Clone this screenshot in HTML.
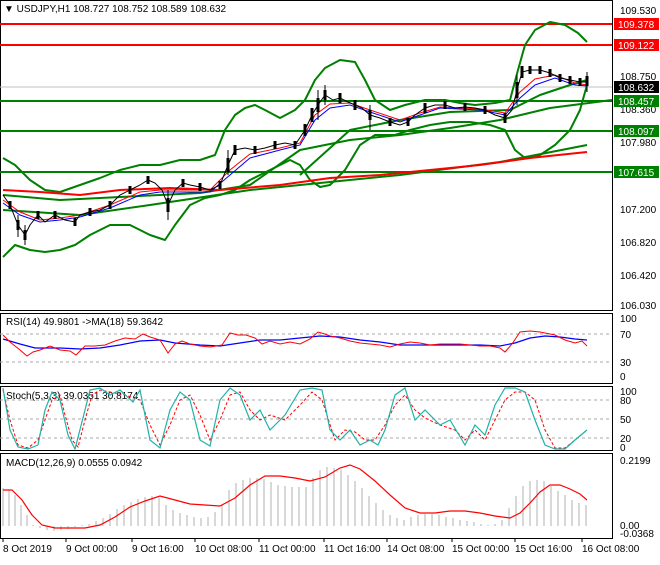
<!DOCTYPE html><html><head><style>
body{margin:0;background:#fff;width:660px;height:560px;overflow:hidden;font-family:"Liberation Sans",sans-serif}
svg text{font-family:"Liberation Sans",sans-serif;font-size:10px}
</style></head><body>
<svg width="660" height="560" xmlns="http://www.w3.org/2000/svg">
<rect width="660" height="560" fill="#fff"/>
<g fill="none" stroke="#000" stroke-width="1">
<rect x="0.5" y="0.5" width="612" height="310"/>
<rect x="0.5" y="313.5" width="612" height="70"/>
<rect x="0.5" y="386.5" width="612" height="64"/>
<rect x="0.5" y="453.5" width="612" height="85"/>
</g>
<line x1="0" y1="87" x2="612" y2="87" stroke="#c0c0c0"/>
<g stroke="#ff0000" stroke-width="2"><line x1="0" y1="24" x2="612" y2="24"/><line x1="0" y1="45" x2="612" y2="45"/></g>
<g stroke="#008000" stroke-width="2"><line x1="0" y1="101" x2="612" y2="101"/><line x1="0" y1="131" x2="612" y2="131"/><line x1="0" y1="172" x2="612" y2="172"/></g>
<g fill="none" stroke="#008000" stroke-width="2" stroke-linejoin="round">
<polyline points="3,158 15,165 30,180 45,190 60,192 80,185 100,178 120,170 140,165 160,165 180,160 200,160 215,155 225,130 235,115 245,108 255,105 265,110 280,118 295,110 305,100 315,80 325,68 340,60 355,62 365,80 375,100 390,110 405,105 425,100 445,100 460,103 475,105 495,103 510,100 518,70 525,45 535,30 550,22 565,25 578,33 587,42"/>
<polyline points="3,257 15,245 30,250 45,252 60,250 75,245 90,235 110,225 130,225 150,235 165,240 175,225 190,205 205,198 220,195 235,190 250,180 270,170 290,160 300,165 310,180 320,187 330,185 345,170 360,145 375,135 395,135 410,130 430,125 450,122 470,122 490,125 505,130 515,150 525,158 540,155 555,145 570,130 580,110 587,85"/>
<polyline points="3,195 60,200 120,197 200,193 250,185 300,150 350,140 400,135 450,128 500,120 550,108 612,100"/>
<polyline points="3,210 80,215 150,205 250,190 300,185 400,175 500,162 587,145"/>
<polyline points="300,175 350,130 400,120 450,112 510,110 540,95 570,85 587,80"/>
</g>
<polyline fill="none" stroke="#ff0000" stroke-width="2" points="3,190 40,192 80,195 120,190 170,188 220,190 280,185 330,178 380,175 430,170 480,165 530,158 587,152"/>
<polyline fill="none" stroke="#0000ff" stroke-width="1" points="3,203 20,215 40,222 60,220 80,217 110,208 140,195 160,192 180,192 210,192 230,175 250,158 280,150 300,145 315,120 330,108 350,105 370,112 400,122 420,115 440,108 480,110 505,115 520,98 535,85 555,78 575,85 587,86"/>
<polyline fill="none" stroke="#ff0000" stroke-width="1" points="3,200 20,212 40,220 60,218 80,215 110,205 140,192 160,190 180,190 210,190 230,170 250,154 280,148 300,143 315,115 330,104 350,103 370,110 400,120 420,113 440,107 480,109 505,113 520,92 535,79 555,75 575,83 587,85"/>
<polyline fill="none" stroke="#000" stroke-width="1" points="3,195 10,205 18,225 25,235 30,225 38,215 45,222 55,215 65,220 75,222 80,215 90,212 100,210 110,205 120,195 130,190 140,185 148,180 155,183 162,190 168,205 175,190 183,183 190,185 200,187 210,190 220,185 228,165 235,150 245,148 255,150 265,148 275,145 285,143 295,145 305,130 312,115 318,105 325,95 333,100 340,98 348,102 355,105 362,108 370,115 380,118 390,122 400,125 408,122 415,115 425,108 435,105 445,105 455,108 465,107 475,108 485,110 495,115 505,118 512,110 517,90 522,72 530,70 540,70 550,73 560,78 570,80 580,82 587,82"/>
<g stroke="#000" stroke-width="3">
<path d="M10 201v8M18 220v10M25 230v10M38 211v8M55 211v8M75 218v8M90 208v8M110 201v8M130 186v8M148 176v8M168 198v14M183 179v8M200 183v8M220 181v8M228 158v14M235 145v10M255 146v8M275 141v8M295 141v8M305 124v12M312 108v14M318 98v14M325 90v10M340 93v10M355 100v10M370 110v10M390 118v8M408 118v8M425 103v10M445 101v8M465 103v8M485 106v8M505 113v10M517 82v16M522 66v12M530 66v8M540 66v8M550 69v8M560 74v8M570 76v8M580 78v8M587 76v10"/>
</g>
<g stroke="#000" stroke-width="1">
<path d="M18 215v22M25 225v20M168 190v30M228 150v25M318 90v30M325 85v20M370 105v25M517 75v30M587 72v20"/>
</g>
<g fill="#000"><text x="620" y="14">109.530</text><text x="620" y="80">108.750</text><text x="620" y="113">108.360</text><text x="620" y="146">107.980</text><text x="620" y="213">107.200</text><text x="620" y="246">106.820</text><text x="620" y="279">106.420</text><text x="620" y="309">106.030</text></g>
<rect x="614" y="18" width="45" height="12" fill="#ff0000"/><text x="618" y="28" fill="#fff">109.378</text>
<rect x="614" y="39" width="45" height="12" fill="#ff0000"/><text x="618" y="49" fill="#fff">109.122</text>
<rect x="614" y="81" width="45" height="12" fill="#000"/><text x="618" y="91" fill="#fff">108.632</text>
<rect x="614" y="95" width="45" height="12" fill="#008000"/><text x="618" y="105" fill="#fff">108.457</text>
<rect x="614" y="125" width="45" height="12" fill="#008000"/><text x="618" y="135" fill="#fff">108.097</text>
<rect x="614" y="166" width="45" height="12" fill="#008000"/><text x="618" y="176" fill="#fff">107.615</text>
<text x="4" y="12" fill="#000">▼ USDJPY,H1  108.727 108.752 108.589 108.632</text>
<g stroke="#aaa" stroke-dasharray="3,3"><line x1="0" y1="334" x2="612" y2="334"/><line x1="0" y1="362" x2="612" y2="362"/></g>
<text x="6" y="325">RSI(14) 49.9801  -&gt;MA(18) 59.3642</text>
<g><text x="620" y="322">100</text><text x="620" y="338">70</text><text x="620" y="366">30</text><text x="620" y="380">0</text></g>
<polyline fill="none" stroke="#0000ff" stroke-width="1.2" points="3,339 20,344 35,348 60,348 80,349 100,348 120,345 140,341 160,340 175,343 200,345 220,346 240,343 260,340 280,340 300,338 320,336 340,337 360,340 380,342 400,345 420,345 440,345 460,345 480,345 500,346 515,343 530,338 545,336 560,337 575,339 587,340"/>
<polyline fill="none" stroke="#ff0000" stroke-width="1" points="3,335 10,342 20,350 27,356 33,352 40,350 50,346 60,350 70,351 76,355 85,346 95,346 105,345 115,341 125,338 135,339 143,334 150,337 160,340 168,353 175,344 182,341 190,344 200,346 210,347 222,345 230,333 238,335 246,335 255,338 262,344 270,341 280,344 290,342 300,344 310,339 318,332 325,334 330,336 340,338 350,341 360,343 370,344 380,345 390,347 400,344 410,342 420,343 430,345 440,344 450,344 460,344 470,345 480,346 490,346 500,348 505,352 512,344 520,332 530,331 540,332 555,335 565,340 575,343 582,341 587,346"/>
<g stroke="#aaa" stroke-dasharray="3,3"><line x1="0" y1="400" x2="612" y2="400"/><line x1="0" y1="419" x2="612" y2="419"/><line x1="0" y1="438" x2="612" y2="438"/></g>
<text x="6" y="399">Stoch(5,3,3) 39.0351 30.8174</text>
<g><text x="620" y="395">100</text><text x="620" y="404">80</text><text x="620" y="423">50</text><text x="620" y="442">20</text><text x="620" y="451">0</text></g>
<polyline fill="none" stroke="#ff0000" stroke-dasharray="3,2" stroke-width="1" points="3,390 10,420 18,445 28,448 38,440 45,420 52,400 60,395 65,415 72,440 78,447 85,420 92,395 100,390 110,392 125,395 140,400 150,425 160,445 170,425 180,400 190,395 200,415 210,440 220,420 230,395 240,392 250,410 260,420 270,415 285,420 300,405 312,392 322,400 335,440 345,430 355,432 365,440 375,440 385,425 395,405 405,395 415,410 425,418 440,425 455,430 465,440 475,430 485,440 495,420 505,400 515,392 525,392 535,400 545,430 555,448 565,448 575,440 587,430"/>
<polyline fill="none" stroke="#20b2aa" stroke-width="1.2" points="3,388 10,430 18,447 28,449 38,445 45,410 52,392 60,400 68,435 75,449 85,410 90,390 100,388 110,395 120,390 133,402 140,390 150,440 160,448 170,410 180,392 190,400 200,440 210,446 220,400 230,388 240,395 250,420 260,410 270,430 285,415 300,390 312,388 322,390 330,430 340,440 350,430 360,445 370,440 378,445 385,430 395,395 405,388 415,420 425,410 440,425 450,420 465,445 475,425 485,435 495,405 505,388 515,388 525,392 535,420 545,445 555,449 565,449 575,440 587,430"/>
<text x="6" y="466">MACD(12,26,9) 0.0555 0.0942</text>
<text x="620" y="464">0.2199</text><text x="620" y="529">0.00</text><text x="620" y="537">-0.0368</text>
<g stroke="#b0b0b0" stroke-width="1">
<path d="M3 526V488M9 526V490M15 526V495M21 526V505M27 526V515M33 526V525M40 526V528M47 526V530M54 526V531M61 526V530M68 526V529M75 526V527M82 526V525M89 526V524M96 526V521M103 526V518M110 526V514M117 526V509M124 526V505M131 526V502M138 526V499M145 526V497M152 526V496M159 526V498M166 526V505M173 526V510M180 526V513M187 526V515M194 526V517M201 526V518M208 526V517M215 526V512M222 526V505M229 526V490M236 526V483M243 526V480M250 526V478M257 526V478M264 526V479M271 526V482M278 526V485M285 526V486M292 526V487M299 526V487M306 526V487M313 526V478M320 526V470M327 526V467M334 526V468M341 526V470M348 526V475M355 526V481M362 526V488M369 526V496M376 526V503M383 526V510M390 526V515M397 526V518M404 526V520M411 526V517M418 526V515M425 526V514M432 526V514M439 526V515M446 526V517M453 526V518M460 526V520M467 526V521M474 526V522M481 526V524M488 526V525M495 526V524M502 526V520M509 526V508M516 526V496M523 526V486M530 526V481M537 526V480M544 526V481M551 526V486M558 526V491M565 526V495M572 526V500M579 526V503M586 526V505"/>
</g>
<polyline fill="none" stroke="#ff0000" stroke-width="1.2" points="3,490 12,490 22,500 32,515 42,525 55,528 70,528 85,528 100,525 115,517 130,507 145,501 160,496 175,500 190,504 205,505 220,506 235,498 250,485 265,476 280,476 295,478 310,481 325,477 340,468 350,465 360,469 375,481 390,495 405,508 420,513 435,513 450,511 465,511 480,513 495,516 510,518 520,513 530,503 540,492 550,485 560,485 570,489 580,494 587,500"/>
<g stroke="#000"><line x1="3" y1="538" x2="3" y2="542"/><line x1="66" y1="538" x2="66" y2="542"/><line x1="132" y1="538" x2="132" y2="542"/><line x1="195" y1="538" x2="195" y2="542"/><line x1="259" y1="538" x2="259" y2="542"/><line x1="324" y1="538" x2="324" y2="542"/><line x1="387" y1="538" x2="387" y2="542"/><line x1="452" y1="538" x2="452" y2="542"/><line x1="515" y1="538" x2="515" y2="542"/><line x1="582" y1="538" x2="582" y2="542"/></g>
<g><text x="3" y="552">8 Oct 2019</text><text x="66" y="552">9 Oct 00:00</text><text x="132" y="552">9 Oct 16:00</text><text x="195" y="552">10 Oct 08:00</text><text x="259" y="552">11 Oct 00:00</text><text x="324" y="552">11 Oct 16:00</text><text x="387" y="552">14 Oct 08:00</text><text x="452" y="552">15 Oct 00:00</text><text x="515" y="552">15 Oct 16:00</text><text x="582" y="552">16 Oct 08:00</text></g>
</svg>
</body></html>
